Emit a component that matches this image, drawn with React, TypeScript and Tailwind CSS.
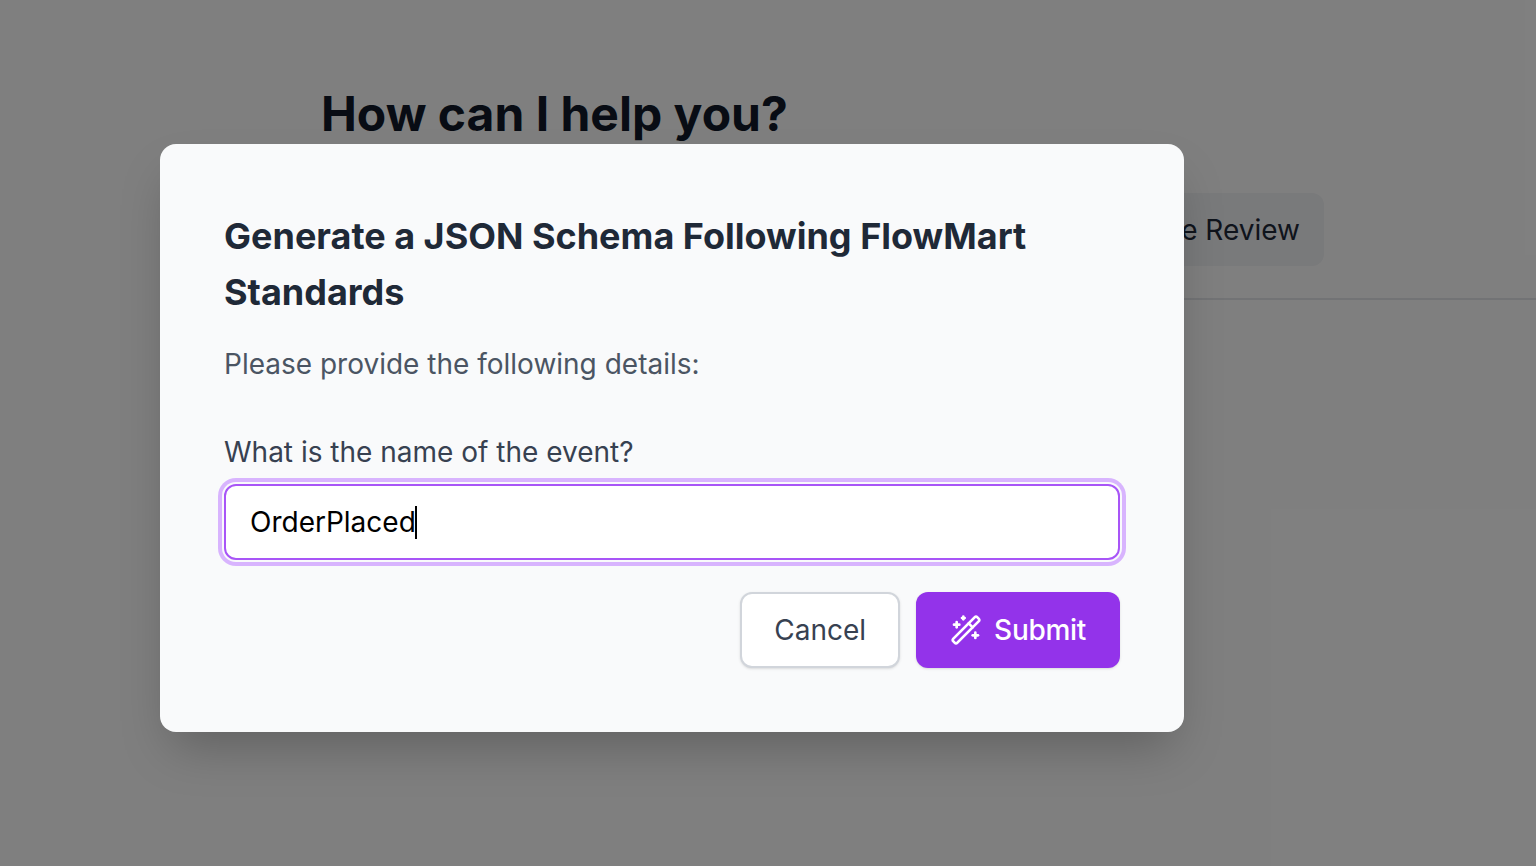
import { WandSparkles } from "lucide-react";

const App = () => {
  return (
    <div className="relative h-[866px] w-full overflow-hidden bg-white font-['Inter',sans-serif]">
      <div className="ml-[321px] flex flex-col">
        <h1 className="pt-[82px] text-[48px] leading-[64px] font-bold text-gray-900">
          How can I help you?
        </h1>
        <div className="mt-[47px] flex justify-end border-b-2 border-gray-200 pr-[212px] pb-[32px]">
          <div className="flex h-[73px] items-center rounded-xl bg-gray-100 pr-6 pl-[26px] text-[28px] text-gray-800">
            Code Review
          </div>
        </div>
      </div>

      {/* modal */}
      <div className="absolute inset-0 bg-black/50">
        <div className="absolute top-[144px] left-[160px] w-[1024px] rounded-2xl bg-[#f9fafb] p-16 shadow-2xl">
          <h2 className="text-[36px] leading-[56px] font-bold text-[#1f2937]">
            Generate a JSON Schema Following FlowMart Standards
          </h2>
          <p className="mt-6 text-[28px] leading-10 text-[#4b5563]">
            Please provide the following details:
          </p>
          <div className="mt-12 mb-3 text-[28px] leading-10 text-[#374151]">
            What is the name of the event?
          </div>
          <div className="flex h-[76px] items-center rounded-xl border-2 border-[#a855f7] bg-white px-6 text-[28px] text-black ring-4 ring-[#d8b4fe] ring-offset-2 ring-offset-[#f9fafb]">
            <span>OrderPlaced</span>
            <span className="-ml-px h-[33px] w-[2px] bg-black" />
          </div>
          <div className="mt-8 flex justify-end gap-4">
            <button className="h-[76px] rounded-xl border-2 border-[#d1d5db] bg-white px-8 text-[28px] font-normal text-[#374151] shadow-sm">
              Cancel
            </button>
            <button className="flex h-[76px] items-center gap-3 rounded-xl border-2 border-transparent bg-[#9333ea] px-8 text-[28px] font-medium tracking-[-0.3px] text-white shadow-sm">
              <WandSparkles size={32} />
              Submit
            </button>
          </div>
        </div>
      </div>
    </div>
  );
};

export default App;
